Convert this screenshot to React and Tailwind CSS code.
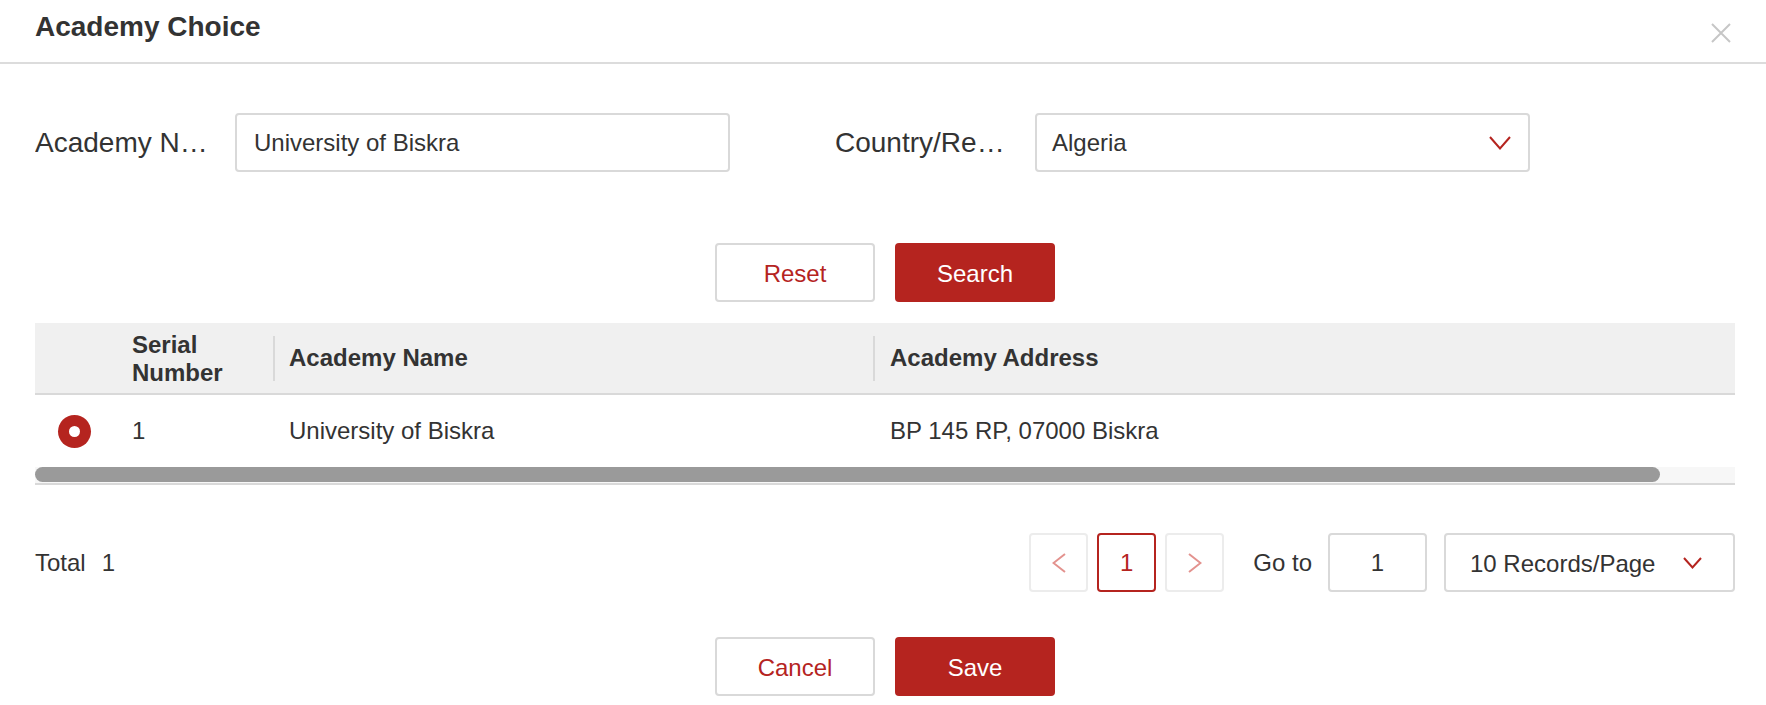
const RED = 'bg-[#b5241f]'

function Chevron({ className, w = 22, h = 14, color = '#b5241f' }) {
  return (
    <svg width={w} height={h} viewBox={`0 0 ${w} ${h}`} className={className} fill="none">
      <polyline points={`1,1 ${w / 2},${h - 1.5} ${w - 1},1`} stroke={color} strokeWidth="2" />
    </svg>
  )
}

function Field({ label, value, select }) {
  return (
    <div className="flex w-[800px] items-center">
      <div className="w-[180px] mr-[20px] truncate text-[28px] leading-[34px]">{label}</div>
      <div
        className={
          'w-[495px] h-[59px] border-2 border-[#d9d9d9] rounded-[4px] pr-[17px] flex items-center justify-between text-[24px] ' +
          (select ? 'pl-[15px]' : 'pl-[17px]')
        }
      >
        <span>{value}</span>
        {select && <Chevron />}
      </div>
    </div>
  )
}

function PageBtn({ children, active }) {
  return (
    <div
      className={
        'w-[59px] h-[59px] rounded-[4px] border-2 flex items-center justify-center text-[24px] ' +
        (active ? 'border-[#b5241f] text-[#b5241f]' : 'border-[#ececec]')
      }
    >
      {children}
    </div>
  )
}

export default function App() {
  return (
    <div className="w-[1766px] h-[705px] overflow-hidden bg-white text-[#333] font-['Liberation_Sans',Arial,sans-serif]">
      <div className="h-[64px] border-b-2 border-[#dcdcdc] flex justify-between items-start px-[35px]">
        <h1 className="pt-[11px] text-[28px] leading-[32px] font-bold">Academy Choice</h1>
        <svg width="20" height="20" viewBox="0 0 20 20" className="mt-[23px]" fill="none">
          <path d="M1 1 L19 19 M19 1 L1 19" stroke="#c6c6c6" strokeWidth="2" />
        </svg>
      </div>

      <div className="pl-[35px] pr-[31px]">
        <div className="mt-[49px] flex">
          <Field label="Academy Name" value="University of Biskra" />
          <Field label="Country/Region" value="Algeria" select />
        </div>

        <div className="mt-[71px] flex justify-center gap-[20px] text-[24px]">
          <button className="w-[160px] h-[59px] pt-[3px] rounded-[4px] border-2 border-[#d9d9d9] text-[#b5241f]">Reset</button>
          <button className={`w-[160px] h-[59px] pt-[3px] rounded-[4px] ${RED} text-white`}>Search</button>
        </div>

        <div className="mt-[21px]">
          <div className="h-[72px] bg-[#f0f0f0] border-b-2 border-[#d9d9d9] flex items-center text-[24px] font-bold">
            <div className="w-[81px]" />
            <div className="w-[157px] pl-[16px] leading-[28px] pt-[1px]">
              Serial
              <br />
              Number
            </div>
            <div className="w-[2px] h-[45px] bg-[#d9d9d9]" />
            <div className="w-[598px] pl-[14px]">Academy Name</div>
            <div className="w-[2px] h-[45px] bg-[#d9d9d9]" />
            <div className="flex-1 pl-[15px]">Academy Address</div>
          </div>

          <div className="h-[72px] flex items-center text-[24px]">
            <div className="w-[81px] pl-[23px]">
              <span className={`w-[33px] h-[33px] rounded-full ${RED} flex items-center justify-center`}>
                <span className="w-[11px] h-[11px] rounded-full bg-white" />
              </span>
            </div>
            <div className="w-[157px] pl-[16px]">1</div>
            <div className="w-[2px]" />
            <div className="w-[598px] pl-[14px]">University of Biskra</div>
            <div className="w-[2px]" />
            <div className="flex-1 pl-[15px]">BP 145 RP, 07000 Biskra</div>
          </div>

          <div className="h-[18px] border-b-2 border-[#d9d9d9] bg-[#f7f7f7]">
            <div className="w-[1625px] h-[15px] rounded-full bg-[#9a9a9a]" />
          </div>
        </div>

        <div className="mt-[48px] h-[59px] flex items-center justify-between text-[24px]">
          <div>
            Total<span className="ml-[16px]">1</span>
          </div>
          <div className="flex items-center">
            <div className="flex gap-[9px]">
              <PageBtn>
                <svg width="14" height="20" viewBox="0 0 14 20" fill="none">
                  <polyline points="13,1 1.5,10 13,19" stroke="#e3928e" strokeWidth="2" />
                </svg>
              </PageBtn>
              <PageBtn active>1</PageBtn>
              <PageBtn>
                <svg width="14" height="20" viewBox="0 0 14 20" fill="none">
                  <polyline points="1,1 12.5,10 1,19" stroke="#e3928e" strokeWidth="2" />
                </svg>
              </PageBtn>
            </div>
            <span className="ml-[29px]">Go to</span>
            <div className="ml-[16px] w-[99px] h-[59px] border-2 border-[#d9d9d9] rounded-[4px] flex items-center justify-center">1</div>
            <div className="ml-[17px] w-[291px] h-[59px] border-2 border-[#d9d9d9] rounded-[4px] pl-[24px] pr-[31px] flex items-center justify-between">
              <span className="pt-[2px]">10 Records/Page</span>
              <Chevron w={19} h={12} />
            </div>
          </div>
        </div>

        <div className="mt-[45px] flex justify-center gap-[20px] text-[24px]">
          <button className="w-[160px] h-[59px] pt-[3px] rounded-[4px] border-2 border-[#d9d9d9] text-[#b5241f]">Cancel</button>
          <button className={`w-[160px] h-[59px] pt-[3px] rounded-[4px] ${RED} text-white`}>Save</button>
        </div>
      </div>
    </div>
  )
}
